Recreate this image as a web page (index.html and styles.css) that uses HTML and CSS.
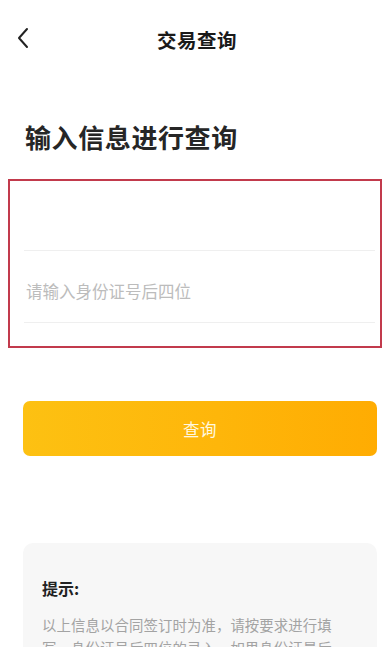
FILE: index.html
```html
<!DOCTYPE html>
<html lang="zh-CN">
<head>
<meta charset="utf-8">
<title>交易查询</title>
<link rel="stylesheet" href="styles.css">
</head>
<body>
<div class="page">
  <header class="nav">
    <span class="back">
      <svg width="14" height="22" viewBox="0 0 14 22"><path d="M11 2 L3 11 L11 20" fill="none" stroke="#222" stroke-width="2" stroke-linecap="round" stroke-linejoin="round"/></svg>
    </span>
    <h1 class="nav-title">交易查询</h1>
  </header>
  <h2 class="heading">输入信息进行查询</h2>
  <div class="form">
    <div class="row"><span class="value"></span></div>
    <div class="row"><span class="placeholder">请输入身份证号后四位</span></div>
  </div>
  <button class="submit">查询</button>
  <section class="tips">
    <div class="tips-title">提示:</div>
    <p class="tips-text">以上信息以合同签订时为准，请按要求进行填写，身份证号后四位的录入，如果身份证最后一位是字母请输入大写字母。</p>
  </section>
</div>
</body>
</html>
```
FILE: styles.css
```css
* { box-sizing: border-box; }
html, body { margin: 0; padding: 0; background: #fff; }
body {
  font-family: "Noto Sans CJK SC", "Noto Sans", sans-serif;
  color: #222;
  overflow: hidden;
}
.page { width: 391px; height: 647px; overflow: hidden; }
.nav {
  height: 78px;
  display: flex;
  align-items: center;
  justify-content: center;
  position: relative;
}
.back {
  position: absolute;
  left: 16px;
  top: 27px;
  display: flex;
}
.nav-title {
  margin: 0 0 0 3px;
  font-size: 19.5px;
  font-weight: 700;
  letter-spacing: 0.5px;
  color: #1a1a1a;
}
.heading {
  margin: 41px 0 0 25px;
  font-size: 26px;
  line-height: 36px;
  font-weight: 700;
  letter-spacing: 0.6px;
  color: #262626;
}
.form {
  margin: 24px 9px 0 8px;
  border: 2px solid #c23a4c;
  padding: 0 5px 23px 14px;
}
.row {
  height: 72px;
  border-bottom: 1px solid #efefef;
  display: flex;
  align-items: center;
  padding-top: 9px;
  padding-left: 2px;
}
.row:first-child { height: 70px; }
.placeholder {
  font-size: 16.5px;
  color: #bcbcbc;
}
.submit {
  display: block;
  margin: 53px 14px 0 23px;
  width: 354px;
  height: 55px;
  border: none;
  border-radius: 7px;
  background: linear-gradient(90deg, #fdc112 0%, #feb60a 55%, #ffac02 100%);
  color: #fff8e0;
  font-family: inherit;
  font-size: 16.5px;
  letter-spacing: 0.5px;
  padding: 0;
}
.tips {
  margin: 87px 14px 0 23px;
  background: #f7f7f7;
  border-radius: 10px;
  padding: 33px 19px 40px 19px;
}
.tips-title {
  font-size: 16px;
  font-weight: 700;
  line-height: 24px;
  color: #222;
}
.tips-text {
  margin: 13px 0 0 0;
  font-size: 14.4px;
  line-height: 23px;
  color: #a3a3a3;
  letter-spacing: 0.1px;
}
```
